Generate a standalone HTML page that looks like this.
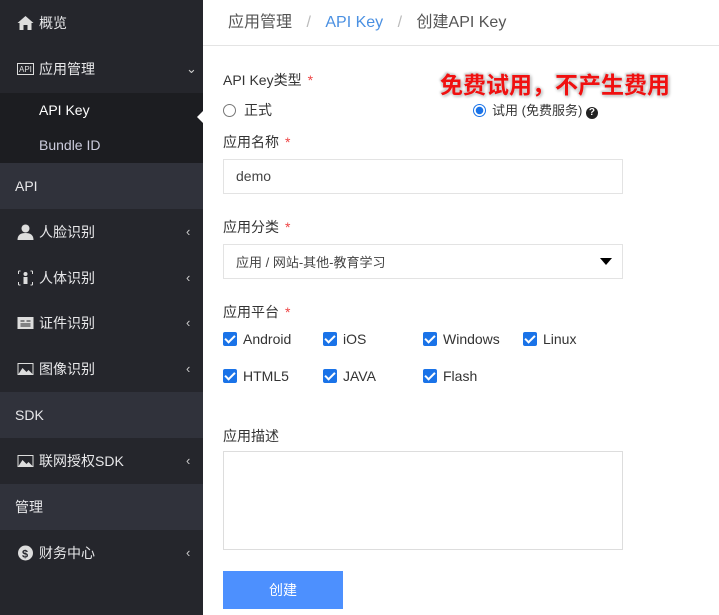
<!DOCTYPE html><html><head><meta charset="utf-8"><style>
*{margin:0;padding:0;box-sizing:border-box}
body{width:719px;height:615px;overflow:hidden;background:#fff;font-family:"Liberation Sans","Noto Sans CJK SC",sans-serif;position:relative}
.sb{position:absolute;left:0;top:0;width:203px;height:615px;background:#25262c;color:#e8e8ea;font-size:14px}
.it{position:absolute;left:0;width:203px;height:46px;line-height:46px;padding-left:18px}
.it .ic{position:absolute;left:17px;top:15px;width:17px;height:16px}
.it .tx{position:absolute;left:39px}
.it .ar{position:absolute;left:186px;top:0;font-size:13px;color:#ccc}
.sec{background:#30323b;padding-left:15px}
.sub{position:absolute;top:93px;left:0;width:203px;height:70px;background:#1c1d21}
.main{position:absolute;left:203px;top:0;right:0}
.hd{height:46px;border-bottom:1px solid #e4e4e4;font-size:16px;color:#555;line-height:46px;padding-left:25px}
.lb{position:absolute;left:223px;font-size:14px;color:#333}
.lb b{color:#e44;font-weight:normal;margin-left:6px}
.inp{position:absolute;left:223px;width:400px;border:1px solid #e3e3e3;font-size:14px;color:#444;padding-left:12px}
.cb{position:absolute;font-size:14px;color:#333}
.cb i{display:inline-block;width:14px;height:14px;background:#1a73e8;border-radius:2px;vertical-align:-2px;margin-right:6px;position:relative}
.cb i:after{content:"";position:absolute;left:4px;top:1px;width:4px;height:8px;border:solid #fff;border-width:0 2px 2px 0;transform:rotate(45deg)}
</style></head><body>
<div class="sb">
<div class="it" style="top:0"><svg class="ic" viewBox="0 0 16 16"><path d="M8 1L0 8h2v7h4v-5h4v5h4V8h2z" fill="#ddd"/></svg><span class="tx">概览</span></div>
<div class="it" style="top:46px"><svg class="ic" viewBox="0 0 17 16"><rect x=".5" y="2.5" width="16" height="11" fill="none" stroke="#ddd"/><text x="2" y="11" font-size="8" fill="#ddd" font-family="Liberation Sans">API</text></svg><span class="tx">应用管理</span><span class="ar">⌄</span></div>
<div class="sub"></div>
<div class="it" style="top:87px;padding-left:39px;color:#fff">API Key</div>
<div style="position:absolute;left:197px;top:110px;width:0;height:0;border:7px solid transparent;border-right-color:#fff;border-left:0"></div>
<div class="it" style="top:122px;padding-left:39px;color:#ccd">Bundle ID</div>
<div class="it sec" style="top:163px">API</div>
<div class="it" style="top:209px"><svg class="ic" viewBox="0 0 16 16"><circle cx="8" cy="4.5" r="4" fill="#ddd"/><path d="M0 16c0-5 3-7 8-7s8 2 8 7z" fill="#ddd"/></svg><span class="tx">人脸识别</span><span class="ar">‹</span></div>
<div class="it" style="top:255px"><svg class="ic" viewBox="0 0 16 16"><path d="M1 1h2M1 1v3M15 1h-2M15 1v3M1 15h2M1 15v-3M15 15h-2M15 15v-3" stroke="#ddd"/><circle cx="8" cy="4" r="2" fill="#ddd"/><rect x="6" y="7" width="4" height="7" fill="#ddd"/></svg><span class="tx">人体识别</span><span class="ar">‹</span></div>
<div class="it" style="top:300px"><svg class="ic" viewBox="0 0 16 16"><rect y="2" width="16" height="12" fill="#ddd"/><path d="M3 6h4M9 6h4M3 9h10M3 11h10" stroke="#25262c"/></svg><span class="tx">证件识别</span><span class="ar">‹</span></div>
<div class="it" style="top:346px"><svg class="ic" viewBox="0 0 16 16"><rect x=".5" y="2.5" width="15" height="11" fill="none" stroke="#ddd"/><path d="M1 13l4-6 4 4 2-2 4 4z" fill="#ddd"/></svg><span class="tx">图像识别</span><span class="ar">‹</span></div>
<div class="it sec" style="top:392px">SDK</div>
<div class="it" style="top:438px"><svg class="ic" viewBox="0 0 16 16"><rect x=".5" y="2.5" width="15" height="11" fill="none" stroke="#ddd"/><path d="M1 13l4-6 4 4 2-2 4 4z" fill="#ddd"/></svg><span class="tx">联网授权SDK</span><span class="ar">‹</span></div>
<div class="it sec" style="top:484px">管理</div>
<div class="it" style="top:530px"><svg class="ic" viewBox="0 0 16 16"><circle cx="8" cy="8" r="7.5" fill="#ddd"/><text x="4.5" y="12.5" font-size="11" font-weight="bold" fill="#25262c" font-family="Liberation Sans">$</text></svg><span class="tx">财务中心</span><span class="ar">‹</span></div>
</div>
<div class="main"><div class="hd">应用管理 <span style="color:#bbb;margin:0 10px">/</span> <span style="color:#4a90e2">API Key</span> <span style="color:#bbb;margin:0 10px">/</span> 创建API Key</div></div>
<div class="lb" style="top:70px">API Key类型<b>*</b></div>
<div style="position:absolute;left:440px;top:66px;font-size:23px;font-weight:bold;color:#f01010;text-shadow:0 0 3px #fff,1px 1px 3px #888,-1px -1px 2px #aaa;font-family:'Noto Sans CJK SC',sans-serif">免费试用，不产生费用</div>
<div class="lb" style="top:100px"><span style="display:inline-block;width:13px;height:13px;border:1px solid #777;border-radius:50%;vertical-align:-2px;margin-right:8px"></span>正式</div>
<div class="lb" style="left:473px;top:100px;font-size:13px"><span style="display:inline-block;width:13px;height:13px;border:1px solid #1a73e8;border-radius:50%;vertical-align:-2px;margin-right:6px;background:radial-gradient(circle,#1a73e8 0 3.5px,#fff 4px)"></span>试用 (免费服务) <span style="display:inline-block;width:12px;height:12px;border-radius:50%;background:#222;color:#fff;font-size:10px;line-height:12px;text-align:center;font-weight:bold;vertical-align:0">?</span></div>
<div class="lb" style="top:132px">应用名称<b>*</b></div>
<div class="inp" style="top:159px;height:35px;line-height:33px">demo</div>
<div class="lb" style="top:217px">应用分类<b>*</b></div>
<div class="inp" style="top:244px;height:35px;line-height:35px;font-size:13px">应用 / 网站-其他-教育学习<span style="position:absolute;right:10px;top:13px;border:6px solid transparent;border-top:7px solid #000;border-bottom:0"></span></div>
<div class="lb" style="top:302px">应用平台<b>*</b></div>
<div class="cb" style="left:223px;top:331px"><i></i>Android</div>
<div class="cb" style="left:323px;top:331px"><i></i>iOS</div>
<div class="cb" style="left:423px;top:331px"><i></i>Windows</div>
<div class="cb" style="left:523px;top:331px"><i></i>Linux</div>
<div class="cb" style="left:223px;top:368px"><i></i>HTML5</div>
<div class="cb" style="left:323px;top:368px"><i></i>JAVA</div>
<div class="cb" style="left:423px;top:368px"><i></i>Flash</div>
<div class="lb" style="top:426px">应用描述</div>
<div class="inp" style="top:451px;height:99px;border-color:#ddd"></div>
<div style="position:absolute;left:223px;top:571px;width:120px;height:38px;background:#4d90fe;color:#fff;font-size:14px;text-align:center;line-height:38px">创建</div>
</body></html>
